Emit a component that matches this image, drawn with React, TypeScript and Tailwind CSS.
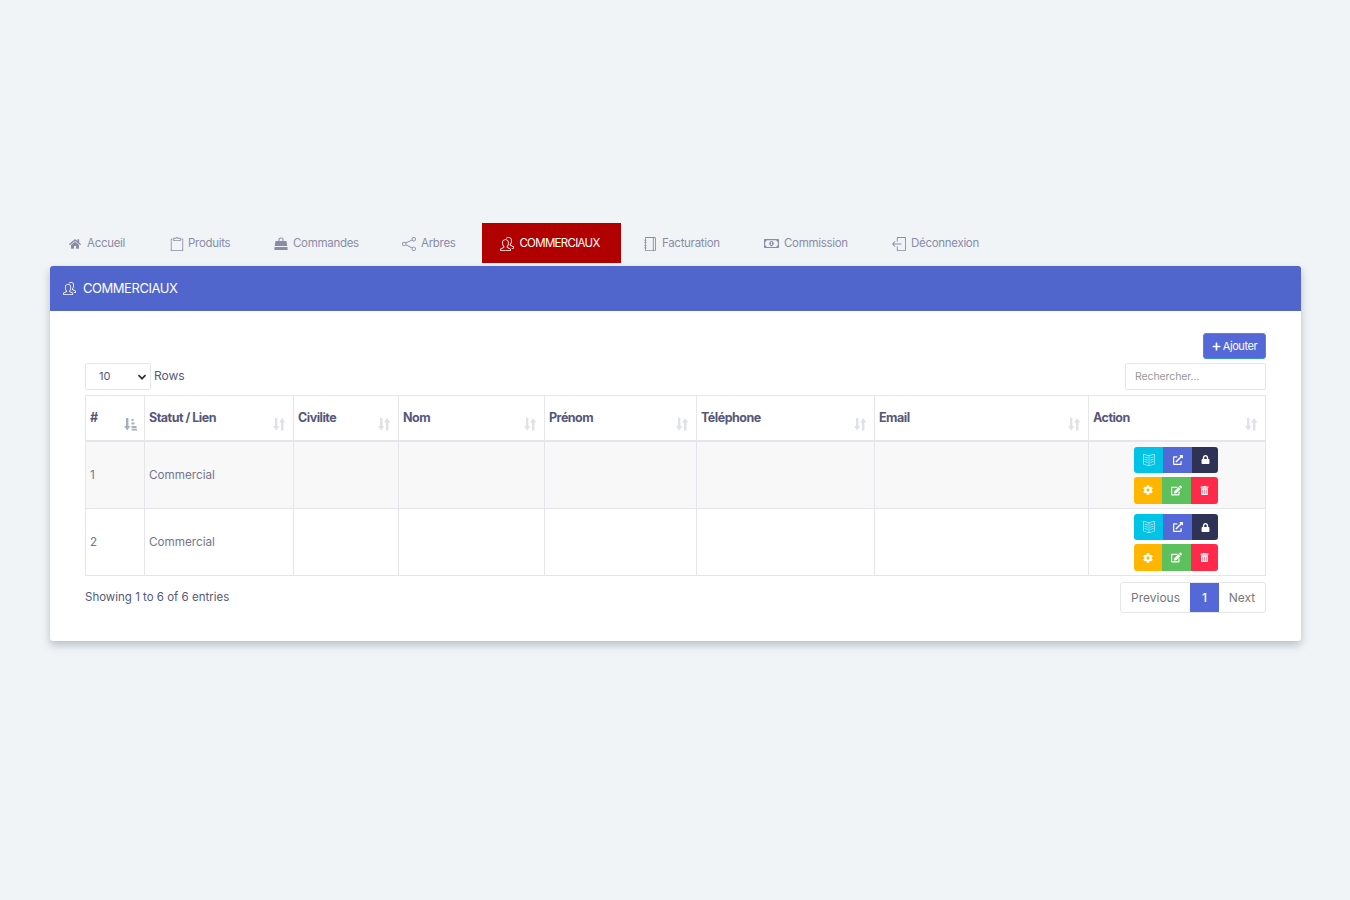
import { FaHome, FaPlus, FaLock, FaCog, FaEdit, FaTrashAlt, FaExternalLinkAlt, FaRegMoneyBillAlt } from "react-icons/fa";
import { SlShare, SlPeople, SlNotebook, SlLogout, SlBookOpen } from "react-icons/sl";
import { TfiClipboard } from "react-icons/tfi";

const BagIcon = () => (
  <svg width="14" height="13" viewBox="0 0 14 13" fill="currentColor">
    <path d="M4.500 4V2.500C4.500 1.200 5.500.5 7 .5s2.500.7 2.500 2V4H8.500V2.600C8.500 1.900 8 1.500 7 1.500s-1.500.4-1.500 1.100V4z" />
    <path d="M1.500 4h11l.8 5H.7zM.6 10h12.800l.3 3H.3z" />
  </svg>
);

const tabs = [
  { label: "Accueil", icon: <FaHome size={12} />, cls: "w-[101px] gap-[6px]" },
  { label: "Produits", icon: <TfiClipboard size={14} />, cls: "w-[104px] gap-[4px]" },
  { label: "Commandes", icon: <BagIcon />, cls: "w-[128px] gap-[5px]" },
  { label: "Arbres", icon: <SlShare size={14} />, cls: "w-[80px] gap-[5px]" },
];
const tabsAfter = [
  { label: "Facturation", icon: <SlNotebook size={14} />, cls: "ml-[22px] w-[121px] gap-[5px]" },
  { label: "Commission", icon: <FaRegMoneyBillAlt size={15} />, cls: "w-[128px] gap-[5px]" },
  { label: "Déconnexion", icon: <SlLogout size={14} />, cls: "w-[110px] gap-[5px]" },
];

const columns = [
  { label: "#", width: "w-[59px]" },
  { label: "Statut / Lien", width: "w-[149px]" },
  { label: "Civilite", width: "w-[105px]" },
  { label: "Nom", width: "w-[146px]" },
  { label: "Prénom", width: "w-[152px]" },
  { label: "Téléphone", width: "w-[178px]" },
  { label: "Email", width: "w-[214px]" },
  { label: "Action", width: "w-[177px]" },
];

const SortIcon = ({ active }: { active?: boolean }) => (
  <svg width="13" height="14" viewBox="0 0 13 14" className={active ? "text-[#a9aebb]" : "text-[#dfe1e6]"}>
    <path d="M2 1h2.400v8h2L3.200 13.500 0 9h2z" fill="currentColor" />
    {active ? (
      <path d="M7.500 2h2v2h-2zM7.500 5.500h3v2h-3zM7.500 9h5v2h-5zM7.500 11.800h5.500v1.700h-5.500z" fill="currentColor" />
    ) : (
      <path d="M8 13.500h2.400v-8h2L9.200 1 6 5.500h2z" fill="currentColor" />
    )}
  </svg>
);

const ActionButtons = () => (
  <div className="flex flex-col items-center gap-[4px] pr-[2px] pt-[1px]">
    <div className="flex h-[26px] text-white text-[10px]">
      <button className="w-[29px] bg-[#00c3e6] rounded-l-[3px] flex items-center justify-center text-[#b5edf8]">
        <SlBookOpen size={12} />
      </button>
      <button className="w-[29px] bg-[#5468d8] flex items-center justify-center">
        <FaExternalLinkAlt size={10} />
      </button>
      <button className="w-[26px] bg-[#2e3356] rounded-r-[3px] flex items-center justify-center">
        <FaLock size={9} />
      </button>
    </div>
    <div className="flex h-[27px] text-white text-[10px]">
      <button className="w-[28px] bg-[#ffb600] rounded-l-[3px] flex items-center justify-center">
        <FaCog size={10} />
      </button>
      <button className="w-[29px] bg-[#5cc15c] flex items-center justify-center">
        <FaEdit size={11} />
      </button>
      <button className="w-[27px] bg-[#ff2a4a] rounded-r-[3px] flex items-center justify-center">
        <FaTrashAlt size={9} />
      </button>
    </div>
  </div>
);

export default function App() {
  return (
    <div className="min-h-[900px] bg-[#f0f4f7] pl-[50px] pr-[49px] pt-[223px] text-[#676a8a] font-['Inter','Liberation_Sans',sans-serif]">
      {/* Tabs */}
      <nav className="flex h-[40px] pl-[19px] text-[11.500px] tracking-[-0.3px] text-[#8a8ca6]">
        {tabs.map((t) => (
          <a key={t.label} className={"flex items-center shrink-0 pt-[1px] " + t.cls}>
            {t.icon}
            <span>{t.label}</span>
          </a>
        ))}
        <a className="w-[139px] flex items-center justify-center gap-[5px] pr-[3px] bg-[#b10000] text-white shrink-0 pt-[1px]">
          <SlPeople size={14} />
          <span className="tracking-[-0.7px]">COMMERCIAUX</span>
        </a>
        {tabsAfter.map((t) => (
          <a key={t.label} className={"flex items-center shrink-0 pt-[1px] " + t.cls}>
            {t.icon}
            <span>{t.label}</span>
          </a>
        ))}
      </nav>

      {/* Card */}
      <div className="mt-[3px] h-[375px] bg-white rounded-[3px] shadow-[0_4px_8px_rgba(60,70,90,0.3)]">
        <div className="h-[45px] bg-[#5066cc] rounded-t-[3px] flex items-center gap-[7px] pl-[13px] text-white text-[13px]">
          <SlPeople size={13} />
          <span className="tracking-[-0.45px]">COMMERCIAUX</span>
        </div>

        <div className="pl-[35px] pr-[35px] pt-[22px]">
          <div className="flex justify-end">
            <button className="h-[26px] w-[63px] flex items-center justify-center gap-[2px] bg-[#5468d8] border border-[#3f8fe0] rounded-[3px] text-white text-[11px] tracking-[-0.4px]">
              <FaPlus size={9} />
              Ajouter
            </button>
          </div>

          <div className="mt-[4px] flex items-center justify-between">
            <div className="flex items-center gap-[3px] text-[12px] text-[#55587a]">
              <div className="w-[66px] h-[27px] border border-[#e4e6eb] rounded-[2px] flex items-center justify-between pl-[13px] pr-[3px] text-[11px]">
                10
                <svg width="10" height="10" viewBox="0 0 10 10">
                  <path d="M1.500 3.200 5 6.700l3.500-3.500" fill="none" stroke="#333" strokeWidth="1.700" />
                </svg>
              </div>
              <span className="-mt-[1px]">Rows</span>
            </div>
            <input
              placeholder="Rechercher..."
              className="w-[141px] h-[27px] border border-[#e4e6eb] rounded-[2px] px-[9px] text-[10.500px] tracking-[-0.1px] placeholder:text-[#999]"
            />
          </div>

          <table className="mt-[5px] w-[1181px] table-fixed border-collapse text-[11.700px] text-[#74768f]">
            <thead>
              <tr className="h-[45px] border-b-2 border-[#e4e6eb]">
                {columns.map((c, i) => (
                  <th key={c.label} className={"relative border border-[#e4e6eb] border-b-2 pl-[4px] pt-[2px] text-left font-bold text-[12.500px] text-[#55587a] tracking-[-0.5px] " + c.width}>
                    {c.label}
                    <span className="absolute right-[7px] top-[21px]">
                      <SortIcon active={i === 0} />
                    </span>
                  </th>
                ))}
              </tr>
            </thead>
            <tbody>
              {[1, 2].map((n) => (
                <tr key={n} className={n === 1 ? "h-[68px] bg-[#f8f8f8]" : "h-[67px] bg-white"}>
                  <td className="border border-[#e4e6eb] pl-[4px] pt-[2px]">{n}</td>
                  <td className="border border-[#e4e6eb] pl-[4px] pt-[2px]">Commercial</td>
                  <td className="border border-[#e4e6eb]"></td>
                  <td className="border border-[#e4e6eb]"></td>
                  <td className="border border-[#e4e6eb]"></td>
                  <td className="border border-[#e4e6eb]"></td>
                  <td className="border border-[#e4e6eb]"></td>
                  <td className="border border-[#e4e6eb]">
                    <ActionButtons />
                  </td>
                </tr>
              ))}
            </tbody>
          </table>

          <div className="mt-[6px] flex items-start justify-between">
            <p className="mt-[7px] text-[11.500px] text-[#55587a]">Showing 1 to 6 of 6 entries</p>
            <div className="flex h-[31px] border border-[#e4e6eb] rounded-[3px] text-[12px] text-[#777]">
              <span className="w-[69px] flex items-center justify-center">Previous</span>
              <span className="w-[29px] flex items-center justify-center bg-[#5468d8] text-white font-medium">1</span>
              <span className="w-[46px] flex items-center justify-center">Next</span>
            </div>
          </div>
        </div>
      </div>
    </div>
  );
}
